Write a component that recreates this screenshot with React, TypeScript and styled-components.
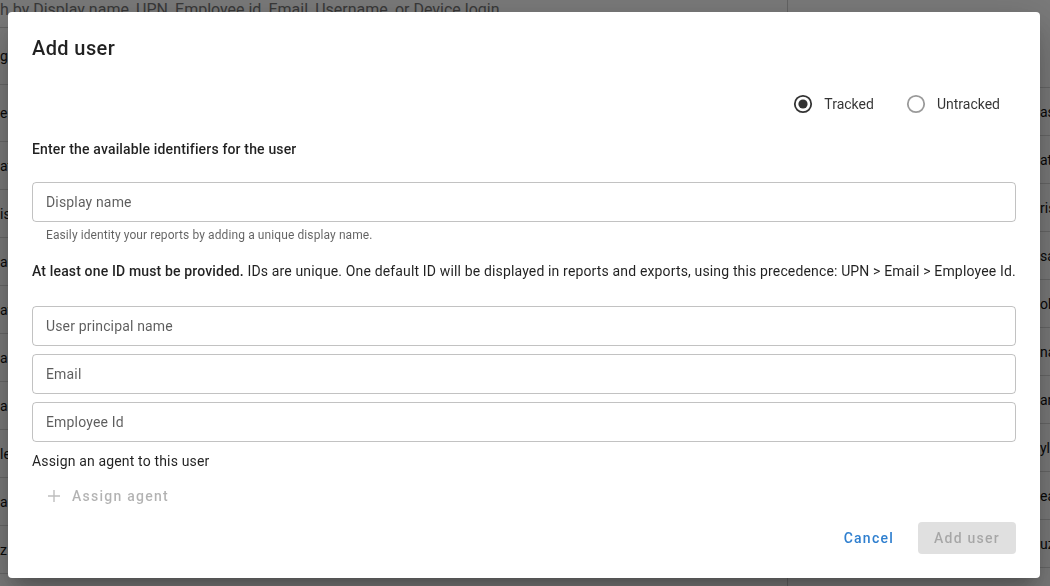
import React from 'react';
import styled, { createGlobalStyle } from 'styled-components';

const GlobalStyle = createGlobalStyle`
  html, body {
    margin: 0;
    padding: 0;
    width: 100%;
    height: 100%;
    overflow: hidden;
    font-family: Roboto, "Liberation Sans", Arial, sans-serif;
    background: #fff;
  }
  * { box-sizing: border-box; }
`;

const leftRows = [
  { h: 57, text: 'ge Wilson' },
  { h: 57, text: 'eLaptop-02' },
  { h: 48, text: 'at Morgan' },
  { h: 48, text: 'is Carter' },
  { h: 48, text: 'ar Patel' },
  { h: 48, text: 'av Green' },
  { h: 48, text: 'a Rossi' },
  { h: 48, text: 'an Lee' },
  { h: 48, text: 'le Brown' },
  { h: 48, text: 'a King' },
  { h: 48, text: 'z Novak' },
];

const rightRows = ['ashley', 'atkins', 'rison', 'sam', 'obrien', 'nash', 'anna', 'ylee', 'eaton', 'uzma'];

const Page = styled.div`
  width: 1050px;
  height: 586px;
  display: grid;
  grid-template-columns: 788px 1fr;
  color: #111;
  font-size: 14px;
`;

const LeftPanel = styled.div`
  display: flex;
  flex-direction: column;
  border-right: 1px solid #d0d0d0;
`;

const SearchBar = styled.div`
  height: 28px;
  line-height: 20px;
  font-size: 16px;
  color: #777;
  white-space: nowrap;
  overflow: hidden;
  border-bottom: 1px solid #d0d0d0;
`;

const Row = styled.div<{ $h: number }>`
  height: ${p => p.$h}px;
  flex: none;
  display: flex;
  align-items: center;
  white-space: nowrap;
  overflow: hidden;
  border-bottom: 1px solid #d8d8d8;
`;

const RightPanel = styled.div`
  display: flex;
  flex-direction: column;
  padding-top: 87px;
  margin-left: -1px;
`;

const RightHead = styled.div`
  border-top: 1px solid #d8d8d8;
`;

const RightCell = styled.span`
  padding-left: 253px;
`;

const Overlay = styled.div`
  position: fixed;
  inset: 0;
  background: rgba(0, 0, 0, 0.52);
  display: flex;
  padding: 12px 10px 8px 8px;
`;

const Dialog = styled.div`
  width: 1032px;
  height: 566px;
  background: #fff;
  border-radius: 4px;
  box-shadow: 0 11px 15px -7px rgba(0,0,0,0.2), 0 24px 38px 3px rgba(0,0,0,0.14), 0 9px 46px 8px rgba(0,0,0,0.12);
  display: flex;
  flex-direction: column;
  padding: 20px 24px 22px;
  color: rgba(0, 0, 0, 0.87);
  letter-spacing: 0.16px;
`;

const Title = styled.h2`
  margin: 0;
  font-size: 20px;
  font-weight: 500;
  line-height: 32px;
  letter-spacing: 0.4px;
`;

const RadioGroup = styled.div`
  margin-top: 20px;
  height: 40px;
  display: flex;
  justify-content: flex-end;
  align-items: center;
  gap: 32px;
  padding-right: 16px;
`;

const RadioOption = styled.label`
  display: flex;
  align-items: center;
  gap: 11px;
  font-size: 14px;
  color: rgba(0, 0, 0, 0.8);
  letter-spacing: 0;
  cursor: pointer;
`;

const SectionTitle = styled.div`
  margin-top: 15px;
  font-size: 14px;
  font-weight: 500;
  line-height: 20px;
`;

const Field = styled.div<{ $top: number }>`
  margin-top: ${p => p.$top}px;
  height: 40px;
  border: 1px solid rgba(0, 0, 0, 0.24);
  border-radius: 4px;
  display: flex;
  align-items: center;
  padding: 0 13px;
  font-size: 14px;
  color: rgba(0, 0, 0, 0.64);
`;

const Helper = styled.div`
  margin-top: 5px;
  padding-left: 14px;
  font-size: 12px;
  line-height: 16px;
  letter-spacing: 0.1px;
  color: rgba(0, 0, 0, 0.62);
`;

const Note = styled.p`
  margin: 18px 0 0;
  font-size: 14px;
  line-height: 20px;
  white-space: nowrap;
  letter-spacing: 0.15px;
  strong { font-weight: 500; }
`;

const FieldStack = styled.div`
  margin-top: 25px;
  display: flex;
  flex-direction: column;
  gap: 8px;
`;

const AgentLabel = styled.div`
  margin-top: 9px;
  font-size: 14px;
  line-height: 20px;
`;

const TextButton = styled.button<{ $color: string }>`
  height: 36px;
  border: 0;
  background: none;
  display: inline-flex;
  align-items: center;
  gap: 12px;
  padding: 0 8px;
  font-family: inherit;
  font-size: 14px;
  font-weight: 500;
  letter-spacing: 1.25px;
  color: ${p => p.$color};
`;

const AssignButton = styled(TextButton)`
  align-self: flex-start;
  margin-top: 7px;
  margin-left: 8px;
`;

const Footer = styled.div`
  margin-top: auto;
  display: flex;
  justify-content: flex-end;
  align-items: center;
  gap: 16px;
`;

const FilledButton = styled.button`
  height: 32px;
  padding: 0 16px;
  border: 0;
  border-radius: 4px;
  background: #e0e0e0;
  color: rgba(0, 0, 0, 0.26);
  font-family: inherit;
  font-size: 14px;
  font-weight: 500;
  letter-spacing: 1.25px;
`;

const RadioIcon = ({ checked }: { checked: boolean }) => (
  <svg width="20" height="20" viewBox="0 0 20 20">
    <circle cx="10" cy="10" r="8.2" fill="none" stroke={checked ? '#333' : '#9a9a9a'} strokeWidth="1.8" />
    {checked && <circle cx="10" cy="10" r="4.6" fill="#333" />}
  </svg>
);

const PlusIcon = () => (
  <svg width="12" height="12" viewBox="0 0 12 12">
    <path d="M6 0v12M0 6h12" stroke="rgba(0,0,0,0.26)" strokeWidth="1.4" />
  </svg>
);

export default function App() {
  return (
    <>
      <GlobalStyle />
      <Page>
        <LeftPanel>
          <SearchBar>h by Display name, UPN, Employee id, Email, Username, or Device login</SearchBar>
          {leftRows.map((r, i) => (
            <Row key={i} $h={r.h}>{r.text}</Row>
          ))}
        </LeftPanel>
        <RightPanel>
          <RightHead />
          {rightRows.map((t, i) => (
            <Row key={i} $h={48}>
              <RightCell>{t}</RightCell>
            </Row>
          ))}
        </RightPanel>
      </Page>
      <Overlay>
        <Dialog>
          <Title>Add user</Title>
          <RadioGroup>
            <RadioOption>
              <RadioIcon checked />
              Tracked
            </RadioOption>
            <RadioOption>
              <RadioIcon checked={false} />
              Untracked
            </RadioOption>
          </RadioGroup>
          <SectionTitle>Enter the available identifiers for the user</SectionTitle>
          <Field $top={23}>Display name</Field>
          <Helper>Easily identity your reports by adding a unique display name.</Helper>
          <Note>
            <strong>At least one ID must be provided.</strong> IDs are unique. One default ID will be displayed in reports and exports, using this precedence: UPN &gt; Email &gt; Employee Id.
          </Note>
          <FieldStack>
            <Field $top={0}>User principal name</Field>
            <Field $top={0}>Email</Field>
            <Field $top={0}>Employee Id</Field>
          </FieldStack>
          <AgentLabel>Assign an agent to this user</AgentLabel>
          <AssignButton $color="rgba(0,0,0,0.3)" disabled>
            <PlusIcon />
            Assign agent
          </AssignButton>
          <Footer>
            <TextButton $color="#2f7fcf">Cancel</TextButton>
            <FilledButton disabled>Add user</FilledButton>
          </Footer>
        </Dialog>
      </Overlay>
    </>
  );
}
